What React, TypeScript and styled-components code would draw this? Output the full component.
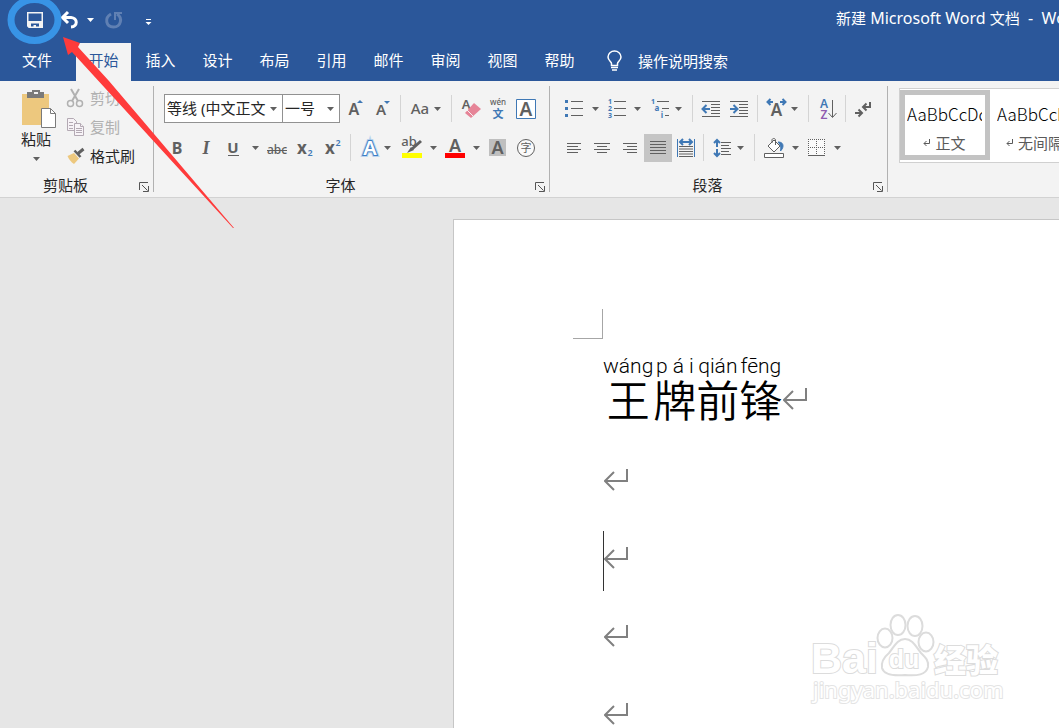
import React from "react";
import styled, { createGlobalStyle, css } from "styled-components";

const GREY = "#606060";
const BLUE = "#3f78b5";

const GlobalStyle = createGlobalStyle`
  * { box-sizing: border-box; }
  body {
    margin: 0;
    font-family: "Noto Sans", "Noto Sans CJK SC", sans-serif;
    font-size: 15px;
    line-height: 20px;
    color: #262626;
    background: #e6e6e6;
  }
  button, select {
    font: inherit;
    color: inherit;
    background: none;
    border: 0;
    border-radius: 0;
    padding: 0;
    margin: 0;
  }
  svg { display: block; flex: none; }
`;

const Window = styled.div`
  position: relative;
  display: flex;
  flex-direction: column;
  height: 100vh;
  overflow: hidden;
`;

const TitleBar = styled.header`
  display: flex;
  align-items: center;
  flex: none;
  height: 43px;
  padding-bottom: 4px;
  background: #2b579a;
  color: #ffffff;
`;

const QuickAccess = styled.div`
  display: flex;
  align-items: center;
  margin-right: auto;
  padding-left: 21px;
`;

const Title = styled.h1`
  flex: none;
  width: 223px;
  margin: 0;
  padding-bottom: 4px;
  font-size: 16px;
  font-weight: 400;
  line-height: 20px;
  white-space: pre;
  overflow: hidden;
`;

const TitleHan = styled.span`
  font-size: 15px;
`;

const TabBar = styled.nav`
  display: flex;
  align-items: stretch;
  gap: 2px;
  flex: none;
  height: 38px;
  background: #2b579a;
  color: #ffffff;
`;

const Tab = styled.button<{ $active?: boolean; $wide?: boolean }>`
  width: ${(p) => (p.$wide ? 74 : 55)}px;
  padding-bottom: 5px;
  white-space: nowrap;
  ${(p) =>
    p.$active &&
    css`
      background: #f3f3f3;
      color: #2b579a;
    `}
`;

const TellMe = styled.button`
  display: flex;
  align-items: center;
  gap: 16px;
  margin-left: 18px;
  padding-bottom: 2px;
  white-space: nowrap;
`;

const Ribbon = styled.div`
  display: flex;
  flex: none;
  height: 117px;
  padding: 5px 0;
  background: #f3f3f3;
  border-bottom: 1px solid #d2d2d2;
  overflow: hidden;
`;

const Group = styled.section`
  display: flex;
  flex-direction: column;
  justify-content: space-between;
  flex: none;
  border-right: 1px solid #b1b1b1;
`;

const ClipboardBody = styled.div`
  display: flex;
  padding-left: 10px;
`;

const ToolRows = styled.div<{ $left: number }>`
  display: flex;
  flex-direction: column;
  gap: 10px;
  padding: 8px 8px 0 ${(p) => p.$left}px;
`;

const ToolRow = styled.div`
  display: flex;
  align-items: center;
  height: 29px;
`;

const Caption = styled.div`
  display: flex;
  align-items: center;
  height: 14px;
  line-height: 14px;
`;

const CaptionText = styled.span`
  flex: 1;
  text-align: center;
`;

const Launcher = styled.button`
  display: flex;
  align-items: flex-end;
  justify-content: flex-end;
  width: 22px;
  height: 14px;
  padding-right: 4px;
`;

const PasteButton = styled.button`
  display: flex;
  flex-direction: column;
  align-items: center;
  width: 52px;
  padding-top: 3px;
`;

const PasteLabel = styled.span`
  line-height: 20px;
  height: 28px;
`;

const ClipActions = styled.div`
  display: flex;
  flex-direction: column;
  gap: 5px;
  width: 91px;
  padding-left: 4px;
`;

const ClipButton = styled.button`
  display: flex;
  align-items: center;
  gap: 4px;
  height: 24px;
  white-space: nowrap;
  &:disabled { color: #b1b1b1; }
`;

const ToolButton = styled.button<{ $on?: boolean }>`
  width: 28px;
  height: 28px;
  flex: none;
  background: ${(p) => (p.$on ? "#c5c5c5" : "transparent")};
`;

const CaretButton = styled.button<{ $start?: boolean; $wide?: boolean }>`
  display: flex;
  align-items: center;
  justify-content: ${(p) => (p.$start ? "flex-start" : "center")};
  width: ${(p) => (p.$wide ? 16 : 14)}px;
  height: 28px;
  flex: none;
`;

const Divider = styled.span`
  width: 1px;
  height: 27px;
  margin: 0 5px 0 3px;
  background: #d4d4d4;
`;

const Nudge = styled.span`
  width: 3px;
`;

const Combos = styled.div`
  display: flex;
  margin: 0 1px;
`;

const ComboBox = styled.div<{ $width: number }>`
  position: relative;
  width: ${(p) => p.$width}px;
  height: 29px;
  background: #ffffff;
  border: 1px solid #919191;
  & + & { margin-left: -1px; }
  svg {
    position: absolute;
    right: 5px;
    top: 12px;
    pointer-events: none;
  }
`;

const ComboSelect = styled.select`
  appearance: none;
  width: 100%;
  height: 27px;
  padding: 0 13px 2px 2px;
  outline: 0;
`;

const Gallery = styled.div`
  display: flex;
  margin: 2px 0 0 11px;
  height: 75px;
  padding: 1px 0;
  background: #ffffff;
  border: 1px solid #d0d0d0;
`;

const StyleItem = styled.button<{ $active?: boolean }>`
  display: flex;
  flex-direction: column;
  align-items: center;
  flex: none;
  width: 90px;
  height: 70px;
  border: 5px solid ${(p) => (p.$active ? "#c3c3c3" : "transparent")};
  padding: 7px 3px 0 2px;
  white-space: nowrap;
`;

const StylePreview = styled.span`
  width: 100%;
  overflow: hidden;
  text-align: left;
  font-family: "Noto Sans CJK SC", sans-serif;
  font-weight: 300;
  font-size: 17px;
  line-height: 24px;
  color: #000000;
`;

const StyleName = styled.span`
  display: flex;
  align-items: center;
  gap: 4px;
  margin-top: 7px;
  color: #5a5a5a;
`;

const Canvas = styled.main`
  position: relative;
  display: flex;
  flex: 1;
  min-height: 0;
  padding: 21px 0 0 453px;
  background: #e6e6e6;
`;

const Page = styled.article`
  flex: 1;
  padding: 89px 0 0 119px;
  background: #ffffff;
  border: 1px solid #c6c6c6;
  border-width: 1px 0 0 1px;
  overflow: hidden;
`;

const MarginCorner = styled.div`
  width: 30px;
  height: 30px;
  border: 1px solid #a6a6a6;
  border-width: 0 1px 1px 0;
`;

const DocBody = styled.div`
  padding-left: 30px;
`;

const RubyLine = styled.p`
  display: flex;
  align-items: flex-start;
  height: 102px;
  margin: 0;
  padding-top: 15px;
`;

const RubyChar = styled.span`
  display: flex;
  flex-direction: column;
  align-items: center;
`;

const Pinyin = styled.span`
  font-family: Roboto, "Noto Sans", sans-serif;
  font-weight: 300;
  font-size: 21px;
  line-height: 24px;
  color: #000000;
  white-space: nowrap;
`;

const Hanzi = styled.span`
  font-family: "Noto Sans CJK SC", sans-serif;
  font-weight: 350;
  font-size: 43px;
  line-height: 40px;
  color: #000000;
`;

const HeadMark = styled.span`
  padding: 32px 0 0 1px;
`;

const EmptyLine = styled.p<{ $caret?: boolean }>`
  display: flex;
  align-items: center;
  height: 60px;
  margin: 12px 0 18px;
  padding-bottom: 6px;
  border-left: 1px solid ${(p) => (p.$caret ? "#333333" : "transparent")};
`;

const Watermark = styled.svg`
  position: absolute;
  right: 53px;
  bottom: 16px;
`;

const Annotation = styled.svg`
  position: absolute;
  left: 0;
  top: 0;
  pointer-events: none;
`;

/* ---------- glyphs ---------- */

const Caret = ({ color = GREY }: { color?: string }) => (
  <svg width="7" height="4" viewBox="0 0 7 4">
    <path d="M0 0H7L3.5 4Z" fill={color} />
  </svg>
);

const Icon = ({ children }: { children: React.ReactNode }) => (
  <svg width="28" height="28" viewBox="0 0 28 28" fill="none" aria-hidden="true">
    {children}
  </svg>
);

type LetterProps = {
  x: number;
  y: number;
  size: number;
  color?: string;
  weight?: number;
  children: string;
};
const Letter = ({ x, y, size, color = GREY, weight = 600, children }: LetterProps) => (
  <text x={x} y={y} fontSize={size} fill={color} fontWeight={weight} textAnchor="middle">
    {children}
  </text>
);

const Lines = ({ rows }: { rows: [number, number, number][] }) => (
  <path d={rows.map(([a, b, y]) => `M${a} ${y}H${b}`).join("")} stroke={GREY} />
);

const Tool = ({ label, on, children }: { label: string; on?: boolean; children: React.ReactNode }) => (
  <ToolButton aria-label={label} $on={on}>
    <Icon>{children}</Icon>
  </ToolButton>
);

const More = ({ start, wide }: { start?: boolean; wide?: boolean }) => (
  <CaretButton aria-label="更多" $start={start} $wide={wide}>
    <Caret />
  </CaretButton>
);

const ReturnMark = () => (
  <svg width="25" height="26" viewBox="0 0 25 26" fill="none" stroke="#808080" strokeWidth="2">
    <path d="M23 2V14H1M10 5L1 14L10 23" />
  </svg>
);

const GroupCaption = ({ text }: { text: string }) => (
  <Caption>
    <CaptionText>{text}</CaptionText>
    <Launcher aria-label={`${text}设置`}>
      <svg width="10" height="10" viewBox="0 0 10 10" fill="none" stroke="#555555">
        <path d="M0.5 8V0.5H9" />
        <path d="M3 3L8.5 8.5M9.5 4V9.5H4" />
      </svg>
    </Launcher>
  </Caption>
);

const tabs = ["文件", "开始", "插入", "设计", "布局", "引用", "邮件", "审阅", "视图", "帮助"];

const ruby = [
  ["wáng", "王"],
  ["p á i", "牌"],
  ["qián", "前"],
  ["fēng", "锋"],
];

const Clipboard = () => (
  <Group>
    <ClipboardBody>
      <PasteButton>
        <svg width="40" height="40" viewBox="0 0 40 40" fill="none">
          <path d="M6 5H33V36H6Z" fill="#edc87e" />
          <path d="M11 3H16V1H24V3H28V9H11Z" fill="#7a7a7a" />
          <path d="M18 3H22V5H18Z" fill="#f3f3f3" />
          <path d="M25.500 19.500H34.500L39.500 24.500V38.500H25.500Z" fill="#ffffff" stroke="#7a7a7a" />
          <path d="M34.500 19.500V24.500H39.500" stroke="#7a7a7a" />
        </svg>
        <PasteLabel>粘贴</PasteLabel>
        <Caret />
      </PasteButton>
      <ClipActions>
        <ClipButton disabled>
          <svg width="20" height="20" viewBox="0 0 20 20" fill="none" stroke="#b1b1b1">
            <path d="M5 1L12 13M13 1L6 13" strokeWidth="2" />
            <circle cx="4.500" cy="15.500" r="3" strokeWidth="1.500" />
            <circle cx="13.500" cy="15.500" r="3" strokeWidth="1.500" />
          </svg>
          剪切
        </ClipButton>
        <ClipButton disabled>
          <svg width="20" height="20" viewBox="0 0 20 20" fill="#f7f3f7" stroke="#b3a9b3">
            <path d="M1.500 1.500H7.500L10.500 4.500V13.500H1.500Z" />
            <path d="M3 5.500H7M3 8.500H7M3 11.500H7" />
            <path d="M8.500 6.500H14.500L17.500 9.500V18.500H8.500Z" />
            <path d="M14.500 6.500V9.500H17.500M10 11.500H16M10 13.500H16M10 15.500H16" />
          </svg>
          复制
        </ClipButton>
        <ClipButton>
          <svg width="20" height="20" viewBox="0 0 20 20" fill="none">
            <path d="M1.500 10L8 7L13 12.500L8 18C5 16 3 13.500 1.500 10Z" fill="#edc87e" />
            <path d="M8.500 4.500L14.500 11" stroke={GREY} strokeWidth="2.500" />
            <path d="M12 7.500L17.500 3" stroke={GREY} strokeWidth="3" />
          </svg>
          格式刷
        </ClipButton>
      </ClipActions>
    </ClipboardBody>
    <GroupCaption text="剪贴板" />
  </Group>
);

const FontGroup = () => (
  <Group>
    <ToolRows $left={9}>
      <ToolRow>
        <Combos>
          <ComboBox $width={119}>
            <ComboSelect aria-label="字体">
              <option>等线 (中文正文</option>
            </ComboSelect>
            <Caret />
          </ComboBox>
          <ComboBox $width={58}>
            <ComboSelect aria-label="字号">
              <option>一号</option>
            </ComboSelect>
            <Caret />
          </ComboBox>
        </Combos>
        <Tool label="增大字号">
          <Letter x={13} y={20} size={16}>A</Letter>
          <path d="M16 8L19 5L22 8Z" fill={BLUE} />
        </Tool>
        <Tool label="减小字号">
          <Letter x={12} y={20} size={15}>A</Letter>
          <path d="M15 6L18 9L21 6Z" fill={BLUE} />
        </Tool>
        <Divider />
        <Tool label="更改大小写">
          <Letter x={14} y={19} size={15} weight={500}>Aa</Letter>
        </Tool>
        <More start />
        <Divider />
        <Tool label="清除格式">
          <Letter x={9} y={14} size={13}>A</Letter>
          <path d="M17 8L24 14L14 23L8 18Z" fill="#e68497" />
          <path d="M10 15L16 21" stroke="#f3f3f3" />
        </Tool>
        <Tool label="拼音指南">
          <Letter x={13} y={10} size={8} weight={500}>wén</Letter>
          <Letter x={13} y={23} size={11} color={BLUE}>文</Letter>
        </Tool>
        <Tool label="字符边框">
          <path d="M3.500 4.500H22.500V23.500H3.500Z" fill="#ffffff" stroke={BLUE} />
          <Letter x={13} y={21} size={19}>A</Letter>
        </Tool>
      </ToolRow>
      <ToolRow>
        <Tool label="加粗">
          <Letter x={14} y={20} size={16} weight={700}>B</Letter>
        </Tool>
        <Tool label="倾斜">
          <text x="15" y="20" fontSize="18" fontStyle="italic" fontWeight="700" fontFamily="Liberation Serif, serif" textAnchor="middle" fill={GREY}>
            I
          </text>
        </Tool>
        <Tool label="下划线">
          <Letter x={14} y={19} size={15} weight={700}>U</Letter>
          <path d="M9 21.500H20" stroke={GREY} />
        </Tool>
        <More wide />
        <Tool label="删除线">
          <Letter x={14} y={20} size={12} weight={500}>abc</Letter>
          <path d="M4 16.500H24" stroke={GREY} />
        </Tool>
        <Tool label="下标">
          <Letter x={11} y={20} size={17} weight={700}>x</Letter>
          <Letter x={19} y={22} size={9} color={BLUE}>2</Letter>
        </Tool>
        <Tool label="上标">
          <Letter x={11} y={20} size={17} weight={700}>x</Letter>
          <Letter x={19} y={12} size={9} color={BLUE}>2</Letter>
        </Tool>
        <Divider />
        <Tool label="文本效果">
          <text x="14" y="21" fontSize="20" fontWeight="600" textAnchor="middle" fill="#ffffff" stroke="#b9d3ee" strokeWidth="4" paintOrder="stroke">A</text>
          <text x="14" y="21" fontSize="20" fontWeight="600" textAnchor="middle" fill="#ffffff" stroke="#3f7fc4" strokeWidth="2" paintOrder="stroke">A</text>
        </Tool>
        <More start />
        <Tool label="突出显示">
          <Letter x={11} y={12} size={13} weight={500}>ab</Letter>
          <path d="M4 19H24V24H4Z" fill="#ffff00" />
          <path d="M23 7L14 15" stroke={GREY} strokeWidth="3" />
          <path d="M13 13L16 16L9 19Z" fill={GREY} />
        </Tool>
        <More />
        <Tool label="字体颜色">
          <Letter x={15} y={18} size={18}>A</Letter>
          <path d="M5 19H25V24H5Z" fill="#ff0000" />
        </Tool>
        <More wide />
        <Tool label="字符底纹">
          <path d="M5 5H22V22H5Z" fill="#bfbfbf" />
          <Letter x={13.5} y={20} size={18}>A</Letter>
        </Tool>
        <Tool label="带圈字符">
          <circle cx="14" cy="14" r="8.500" stroke={GREY} fill="#fafafa" />
          <Letter x={14} y={18} size={11} weight={400}>字</Letter>
        </Tool>
      </ToolRow>
    </ToolRows>
    <GroupCaption text="字体" />
  </Group>
);

const ParagraphGroup = () => (
  <Group>
    <ToolRows $left={10}>
      <ToolRow>
        <Tool label="项目符号">
          <path d="M5 5H8V8H5ZM5 12H8V15H5ZM5 19H8V22H5Z" fill={BLUE} />
          <Lines rows={[[11, 23, 6.5], [11, 23, 13.5], [11, 23, 20.5]]} />
        </Tool>
        <More />
        <Tool label="编号">
          <Letter x={8} y={9} size={7} color={BLUE} weight={700}>1</Letter>
          <Letter x={8} y={16} size={7} color={BLUE} weight={700}>2</Letter>
          <Letter x={8} y={23} size={7} color={BLUE} weight={700}>3</Letter>
          <Lines rows={[[12, 24, 6.5], [12, 24, 13.5], [12, 24, 20.5]]} />
        </Tool>
        <More />
        <Nudge />
        <Tool label="多级列表">
          <Letter x={6} y={9} size={7} color={BLUE} weight={700}>1</Letter>
          <Letter x={10} y={16} size={8} color={BLUE} weight={700}>a</Letter>
          <Letter x={15} y={23} size={8} color={BLUE} weight={700}>i</Letter>
          <Lines rows={[[10, 22, 6.5], [15, 22, 13.5], [18, 22, 20.5]]} />
        </Tool>
        <More start />
        <Divider />
        <Tool label="减少缩进量">
          <Lines rows={[[4, 22, 6.5], [13, 22, 9.5], [13, 22, 12.5], [13, 22, 15.5], [13, 22, 18.5], [4, 22, 21.5]]} />
          <path d="M12 14H5M8.500 10L4.500 14L8.500 18" stroke={BLUE} strokeWidth="2" />
        </Tool>
        <Tool label="增加缩进量">
          <Lines rows={[[4, 22, 6.5], [13, 22, 9.5], [13, 22, 12.5], [13, 22, 15.5], [13, 22, 18.5], [4, 22, 21.5]]} />
          <path d="M4 14H11M7.500 10L11.500 14L7.500 18" stroke={BLUE} strokeWidth="2" />
        </Tool>
        <Divider />
        <Tool label="中文版式">
          <path d="M10 7H5M7.500 4L4.500 7L7.500 10M17 7H22M19.500 4L22.500 7L19.500 10" stroke={BLUE} strokeWidth="2" />
          <Letter x={13.5} y={21} size={17}>A</Letter>
        </Tool>
        <More start />
        <Divider />
        <Tool label="排序">
          <Letter x={10} y={13} size={12} color={BLUE}>A</Letter>
          <Letter x={10} y={24} size={12} color="#8f5bb0">Z</Letter>
          <path d="M18.500 5V22M14.500 18L18.500 22.500L22.500 18" stroke={GREY} />
        </Tool>
        <Divider />
        <Tool label="显示编辑标记">
          <path d="M19 7V12H12M15.500 8.500L12 12L15.500 15.500M4 18H11M7.500 14.500L11 18L7.500 21.500" stroke={GREY} strokeWidth="2" />
        </Tool>
      </ToolRow>
      <ToolRow>
        <Tool label="左对齐">
          <Lines rows={[[7, 21, 9.5], [7, 18, 12.5], [7, 21, 15.5], [7, 18, 18.5]]} />
        </Tool>
        <Tool label="居中">
          <Lines rows={[[6, 22, 9.5], [9, 19, 12.5], [6, 22, 15.5], [9, 19, 18.5]]} />
        </Tool>
        <Tool label="右对齐">
          <Lines rows={[[7, 21, 9.5], [11, 21, 12.5], [7, 21, 15.5], [11, 21, 18.5]]} />
        </Tool>
        <Tool label="两端对齐" on>
          <Lines rows={[[6, 22, 7.5], [6, 22, 10.5], [6, 22, 13.5], [6, 22, 16.5], [6, 22, 19.5]]} />
        </Tool>
        <Tool label="分散对齐">
          <path d="M5.500 5V23M22.500 5V23" stroke={BLUE} />
          <path d="M8 8H20M11 5L8 8L11 11M17 5L20 8L17 11" stroke={BLUE} strokeWidth="2" />
          <Lines rows={[[7, 21, 12.5], [7, 21, 15], [7, 21, 17.5], [7, 21, 20], [7, 21, 22.5]]} />
        </Tool>
        <Divider />
        <Tool label="行距">
          <path d="M8 6V13M5 9L8 6L11 9M8 15V22M5 19L8 22L11 19" stroke={BLUE} strokeWidth="2" />
          <Lines rows={[[12, 22, 8.5], [12, 20, 11.5], [12, 22, 14.5], [12, 20, 17.5], [12, 22, 20.5]]} />
        </Tool>
        <More start />
        <Divider />
        <Tool label="底纹">
          <path d="M4.500 19.500H23.500V23.500H4.500Z" fill="#ffffff" stroke={GREY} />
          <path d="M8 12L14 6L20 12L14 18Z" fill="#ffffff" stroke={GREY} />
          <path d="M12 9V6C12 4 15.500 4 15.500 6V11" stroke={GREY} />
          <path d="M18 8C22 8 23 10 23 12C23 14 21.500 16 20.500 17C21 14 21 11 18 8Z" fill={BLUE} stroke={BLUE} />
        </Tool>
        <More />
        <Tool label="边框">
          <path d="M6 5H23V22H6Z" fill="#fafafa" />
          <path d="M6 5.500H23M6 13.500H23M6.500 5V21M14.500 5V21M22.500 5V21" stroke={GREY} strokeDasharray="1 1" />
          <path d="M6 21.500H23" stroke={GREY} />
        </Tool>
        <More />
      </ToolRow>
    </ToolRows>
    <GroupCaption text="段落" />
  </Group>
);

const StyleCard = ({ name, active }: { name: string; active?: boolean }) => (
  <StyleItem $active={active}>
    <StylePreview>AaBbCcDd</StylePreview>
    <StyleName>
      <svg width="8" height="8" viewBox="0 0 8 8" fill="none" stroke="#5a5a5a">
        <path d="M6.500 0V4.500H1M3.500 2L1 4.500L3.500 7" />
      </svg>
      {name}
    </StyleName>
  </StyleItem>
);

const BaiduMark = () => (
  <Watermark width="200" height="100" viewBox="0 0 200 100" fill="#ffffff" stroke="#dcdcdc" strokeWidth="2" aria-label="Baidu 经验">
    <ellipse cx="79" cy="26" rx="7.500" ry="9.500" />
    <ellipse cx="92" cy="13" rx="7.500" ry="10" />
    <ellipse cx="109" cy="14" rx="7.500" ry="10" />
    <ellipse cx="120" cy="30" rx="7.500" ry="9.500" />
    <path d="M99 27C91 27 88 35 83 41C77 46 75 50 76 56C78 63 87 64 99 63C111 64 120 63 122 55C123 49 120 46 115 41C110 35 107 27 99 27Z" />
    <g paintOrder="stroke">
      <text x="5" y="61" fontSize="43" fontWeight="700" fontFamily="Liberation Sans, sans-serif">Bai</text>
      <text x="98" y="56" fontSize="25" fontWeight="700" fontFamily="Liberation Sans, sans-serif" textAnchor="middle">du</text>
      <text x="128" y="60" fontSize="32" fontWeight="900" fontFamily="Noto Sans CJK SC, sans-serif">经验</text>
      <text x="7" y="86" fontSize="22" fontWeight="400" stroke="#e4e4e4">jingyan.baidu.com</text>
    </g>
  </Watermark>
);

export default function App() {
  return (
    <Window>
      <GlobalStyle />
      <TitleBar>
        <QuickAccess>
          <Tool label="保存">
            <path d="M6.750 6.750H21.250V21.250H8L6.750 20Z" stroke="#f3f3f3" strokeWidth="1.500" />
            <path d="M7 15H21V21H18V17.500H10V21H7Z" fill="#f3f3f3" />
            <path d="M12.500 19H15V21.500H12.500Z" fill="#f3f3f3" />
          </Tool>
          <Nudge />
          <Nudge />
          <Tool label="撤消">
            <path d="M8 11.500H16C23 12 23 20.500 16 21" stroke="#ffffff" strokeWidth="3" />
            <path d="M13 6L7.500 11.500L13 17" stroke="#ffffff" strokeWidth="3" />
          </Tool>
          <CaretButton aria-label="更多撤消">
            <Caret color="#ffffff" />
          </CaretButton>
          <Nudge />
          <Tool label="重复">
            <path d="M11 8C4 12 6 21 13.500 21C21 21 23 12 17 8" stroke="#6080b3" strokeWidth="3" />
            <path d="M15 14V7H22" stroke="#6080b3" strokeWidth="2" />
          </Tool>
          <Nudge />
          <Nudge />
          <Tool label="自定义快速访问工具栏">
            <path d="M12 13.500H17" stroke="#ffffff" />
            <path d="M11.500 16H17.500L14.500 19Z" fill="#ffffff" />
          </Tool>
        </QuickAccess>
        <Title>
          <TitleHan>新建</TitleHan>
          {" Microsoft Word "}
          <TitleHan>文档</TitleHan>
          {"  -  Word"}
        </Title>
      </TitleBar>
      <TabBar>
        {tabs.map((t, i) => (
          <Tab key={t} $wide={i === 0} $active={i === 1}>
            {t}
          </Tab>
        ))}
        <TellMe>
          <svg width="15" height="22" viewBox="0 0 15 22" fill="none" stroke="#ffffff" strokeWidth="1.500">
            <path d="M4.500 15.500V13.500C4.500 12 1 10.500 1 7C1 3.500 4 1 7.500 1C11 1 14 3.500 14 7C14 10.500 10.500 12 10.500 13.500V15.500Z" />
            <path d="M4 17.500H11M5 20H10" />
          </svg>
          操作说明搜索
        </TellMe>
      </TabBar>
      <Ribbon>
        <Clipboard />
        <FontGroup />
        <ParagraphGroup />
        <Gallery>
          <StyleCard name="正文" active />
          <StyleCard name="无间隔" />
        </Gallery>
      </Ribbon>
      <Canvas>
        <Page>
          <MarginCorner />
          <DocBody>
            <RubyLine>
              {ruby.map(([p, h]) => (
                <RubyChar key={h}>
                  <Pinyin>{p}</Pinyin>
                  <Hanzi>{h}</Hanzi>
                </RubyChar>
              ))}
              <HeadMark>
                <ReturnMark />
              </HeadMark>
            </RubyLine>
            {[0, 1, 2, 3].map((n) => (
              <EmptyLine key={n} $caret={n === 1}>
                <ReturnMark />
              </EmptyLine>
            ))}
          </DocBody>
        </Page>
        <BaiduMark />
      </Canvas>
      <Annotation width="240" height="232" viewBox="0 0 240 232" fill="none" aria-hidden="true">
        <ellipse cx="34.500" cy="20" rx="23.500" ry="20.500" stroke="#3894e6" strokeWidth="7" />
        <path d="M63 37L80 43L78 47L109 81L234 228H233L72 52L68 55Z" fill="#ff3b3b" />
      </Annotation>
    </Window>
  );
}
